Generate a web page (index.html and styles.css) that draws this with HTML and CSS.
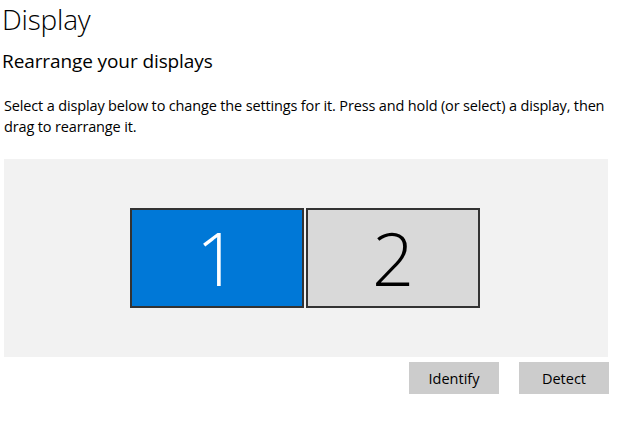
FILE: index.html
```html
<!DOCTYPE html>
<html>
<head>
<meta charset="utf-8">
<link rel="stylesheet" href="styles.css">
</head>
<body>
<div class="page">
  <h1 class="title">Display</h1>
  <h2 class="subtitle">Rearrange your displays</h2>
  <p class="desc">Select a display below to change the settings for it. Press and hold (or select) a display, then<br>drag to rearrange it.</p>
  <div class="arrange">
    <div class="monitors">
      <div class="monitor selected">1</div>
      <div class="monitor">2</div>
    </div>
  </div>
  <div class="actions">
    <button class="btn">Identify</button>
    <button class="btn">Detect</button>
  </div>
</div>
</body>
</html>
```

FILE: styles.css
```css
html, body {
  margin: 0;
  padding: 0;
  background: #ffffff;
}
.page {
  font-family: "Open Sans", "Noto Sans", sans-serif;
  color: #000;
  width: 617px;
  display: flex;
  flex-direction: column;
}
.title {
  margin: 0;
  padding-left: 2px;
  font-size: 28px;
  font-weight: 300;
  line-height: normal;
  letter-spacing: -0.2px;
}
.subtitle {
  margin: 11px 0 0 2px;
  font-size: 19px;
  font-weight: 400;
  line-height: 24px;
  letter-spacing: -0.1px;
}
.desc {
  margin: 22px 0 0 4px;
  font-size: 14.5px;
  line-height: 21px;
  letter-spacing: -0.15px;
  white-space: nowrap;
}
.arrange {
  margin: 22px 0 0 4px;
  width: 604px;
  height: 198px;
  background: #f2f2f2;
  display: flex;
  align-items: center;
  justify-content: center;
}
.monitors {
  display: flex;
  gap: 2px;
  margin-right: 2px;
}
.monitor {
  box-sizing: border-box;
  width: 174px;
  height: 100px;
  border: 2px solid #333333;
  background: #d9d9d9;
  color: #000;
  font-family: "Open Sans", "Noto Sans", sans-serif;
  font-weight: 300;
  font-size: 74px;
  line-height: 96px;
  text-align: center;
}
.monitor.selected {
  background: #0078d7;
  color: #fff;
}
.actions {
  margin-top: 5px;
  display: flex;
  justify-content: flex-end;
  gap: 20px;
  width: 609px;
}
.btn {
  width: 90px;
  height: 32px;
  border: none;
  background: #cccccc;
  color: #000;
  font-family: "Open Sans", "Noto Sans", sans-serif;
  font-size: 14.5px;
  padding: 0;
}
```
